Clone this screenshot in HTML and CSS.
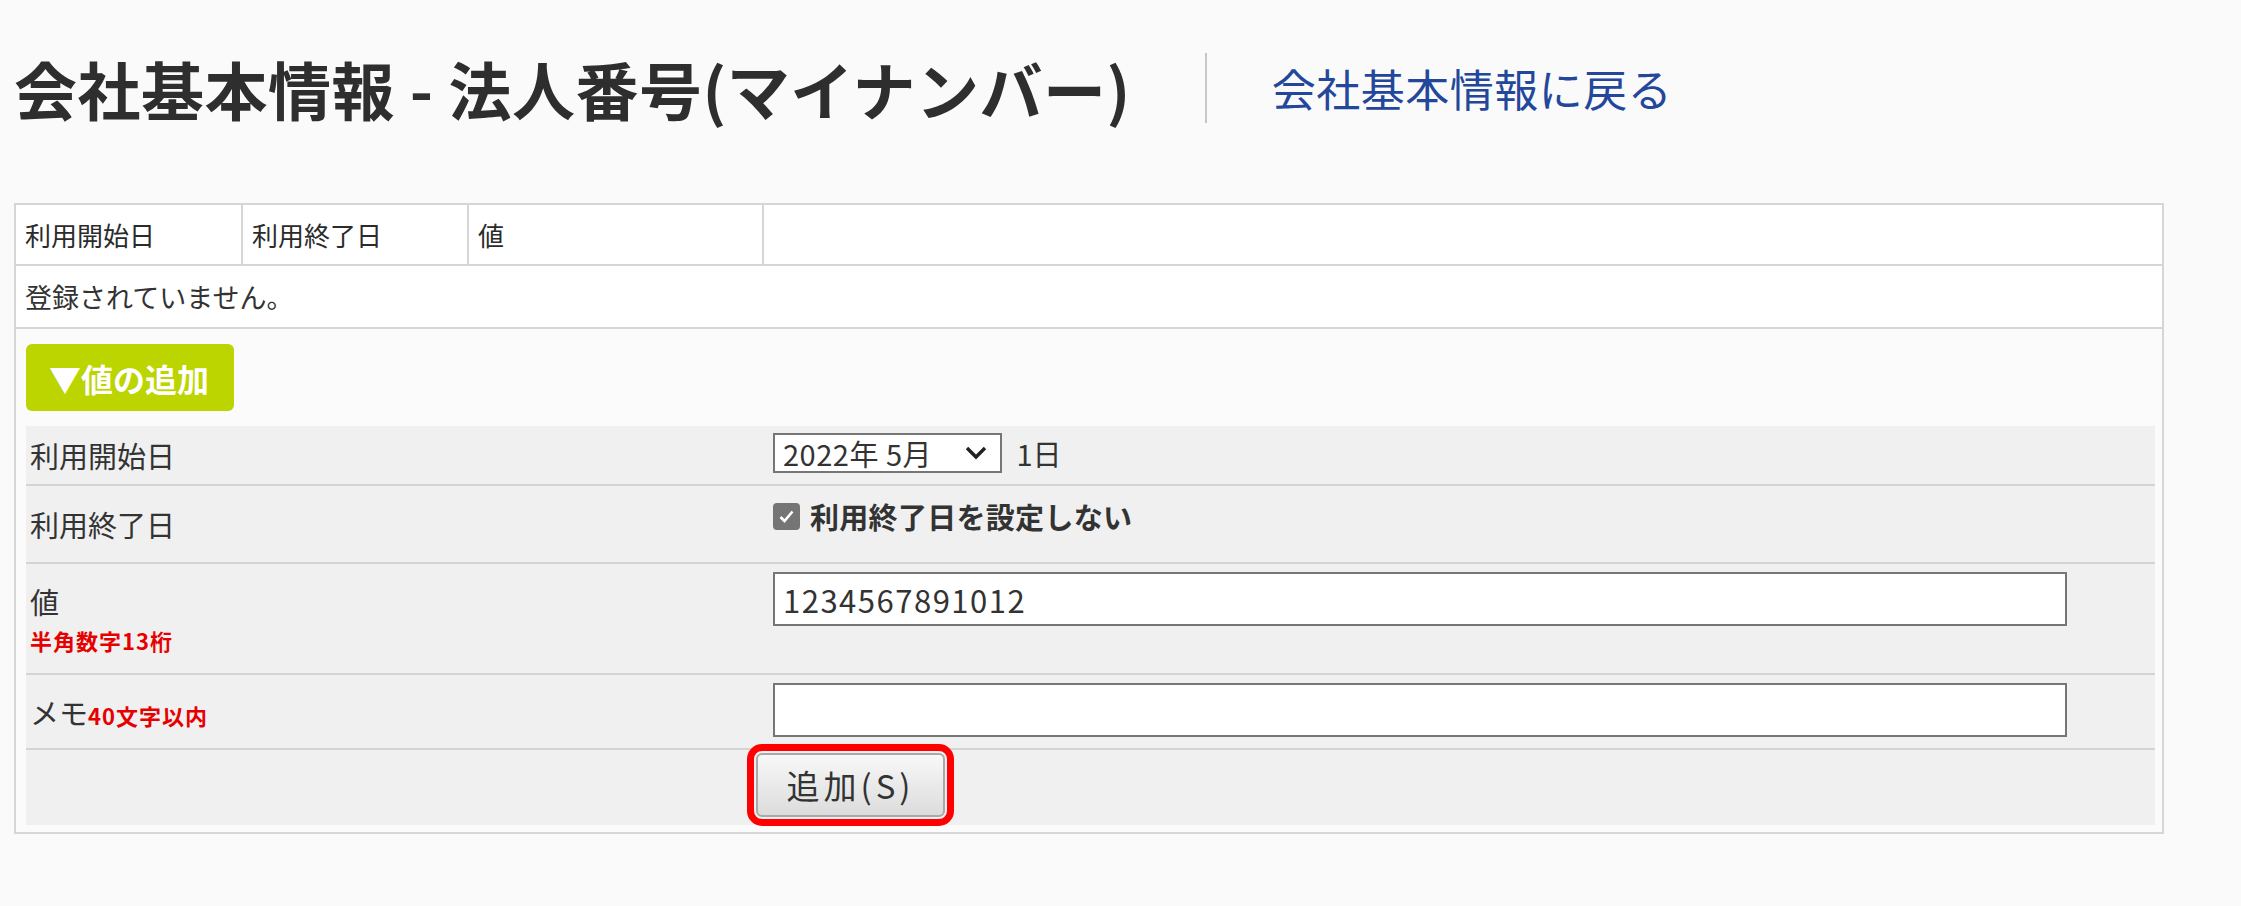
FILE: index.html
```html
<!DOCTYPE html>
<html lang="ja">
<head>
    <meta charset="UTF-8">
    <meta name="viewport" content="width=device-width, initial-scale=1.0">
    <title>会社基本情報 - 法人番号(マイナンバー)</title>
    <link rel="stylesheet" href="styles.css">
</head>
<body>
    <div class="page">
        <header class="page-head">
            <h1 class="page-title">会社基本情報 - 法人番号(マイナンバー)</h1>
            <span class="head-sep"></span>
            <a class="back-link" href="#">会社基本情報に戻る</a>
        </header>

        <table class="list">
            <tr class="list-head">
                <th class="col-start">利用開始日</th>
                <th class="col-end">利用終了日</th>
                <th class="col-value">値</th>
                <th></th>
            </tr>
            <tr>
                <td class="empty" colspan="4">登録されていません。</td>
            </tr>
            <tr>
                <td class="add-area" colspan="4">
                    <button class="toggle" type="button">▼値の追加</button>

                    <!-- 追加フォーム -->
                    <table class="form">
                        <tr class="row-start">
                            <th>利用開始日</th>
                            <td>
                                <span class="select-box">
                                    <span>2022年 5月</span>
                                    <svg width="22" height="14" viewBox="0 0 22 14"><polyline points="2,2 11,11 20,2" fill="none" stroke="#222" stroke-width="3.4"/></svg>
                                </span>
                                <span class="day">1日</span>
                            </td>
                        </tr>
                        <tr class="row-end">
                            <th>利用終了日</th>
                            <td>
                                <label class="check">
                                    <span class="check-box"><svg width="19" height="19" viewBox="0 0 19 19"><polyline points="3.5,10 7.5,14 15.5,4.5" fill="none" stroke="#fff" stroke-width="2.6"/></svg></span>
                                    利用終了日を設定しない
                                </label>
                            </td>
                        </tr>
                        <tr class="row-value">
                            <th>値<br><span class="note">半角数字13桁</span></th>
                            <td><input class="text-input" type="text" value="1234567891012"></td>
                        </tr>
                        <tr class="row-memo">
                            <th>メモ<span class="note">40文字以内</span></th>
                            <td><input class="text-input" type="text" value=""></td>
                        </tr>
                        <tr class="row-submit">
                            <th></th>
                            <td><button class="submit" type="submit">追加(S)</button></td>
                        </tr>
                    </table>
                </td>
            </tr>
        </table>
    </div>
</body>
</html>
```

FILE: styles.css
```css
* {
    box-sizing: border-box;
}

body {
    margin: 0;
    background: #fafafa;
    color: #333;
    font-family: "Noto Sans CJK JP", "Noto Sans", sans-serif;
}

.page {
    padding: 0 77px 0 14px;
}

/* 見出し */
.page-head {
    display: flex;
    align-items: center;
    padding-top: 50px;
}

.page-title {
    margin: 0;
    font-size: 63px;
    line-height: 76px;
    font-weight: 700;
    letter-spacing: 0.5px;
    color: #2e2e2e;
}

.head-sep {
    width: 2px;
    height: 70px;
    background: #c6c6c6;
    margin: 0 65px 0 74px;
}

.back-link {
    font-size: 44px;
    line-height: 1.2;
    letter-spacing: 0.5px;
    color: #23479b;
    text-decoration: none;
}

/* 一覧 */
.list {
    width: 100%;
    margin-top: 77px;
    border-collapse: collapse;
    border: 2px solid #d2d2d2;
    background: #fff;
}

.list-head th,
.list .empty,
.list .add-area {
    border: 2px solid #d6d6d6;
    text-align: left;
    font-weight: normal;
}

.list-head th {
    height: 61px;
    padding: 0 9px;
    font-size: 26px;
    color: #2b2b2b;
}

.list-head .col-start { width: 227px; }
.list-head .col-end { width: 226px; }
.list-head .col-value { width: 295px; }

.list .empty {
    height: 63px;
    padding: 0 9px;
    font-size: 27px;
}

.list .add-area {
    background: #fbfbfb;
    padding: 15px 7px 7px 10px;
}

.toggle {
    display: block;
    height: 67px;
    padding: 0 25px 0 23px;
    font-family: inherit;
    font-size: 32px;
    font-weight: 700;
    color: #fff;
    background: #bcd400;
    border: none;
    border-radius: 6px;
}

/* 追加フォーム */
.form {
    width: 100%;
    margin-top: 15px;
    border-collapse: collapse;
    background: #f0f0f0;
}

.form tr + tr > th,
.form tr + tr > td {
    border-top: 2px solid #d4d4d4;
}

.form th {
    width: 727px;
    padding: 0 0 0 4px;
    font-size: 29px;
    font-weight: normal;
    line-height: 36px;
    text-align: left;
    vertical-align: middle;
}

.form td {
    padding: 0 0 0 20px;
    font-size: 29px;
    vertical-align: top;
}

.row-start th, .row-start td { height: 59px; }
.row-start td { padding-top: 1px; }

.row-end th, .row-end td { height: 78px; }
.row-end td { padding-top: 10px; }

.row-value th, .row-value td { height: 111px; }
.row-value td { padding-top: 8px; }

.row-memo th, .row-memo td { height: 75px; }
.row-memo td { padding-top: 8px; }

.row-submit th, .row-submit td { height: 76px; }
.row-submit td { padding: 3px 0 0 3px; }

.note {
    font-size: 22px;
    font-weight: 700;
    letter-spacing: 1px;
    line-height: 30px;
    color: #e60000;
}

.select-box {
    display: inline-flex;
    align-items: center;
    justify-content: space-between;
    width: 229px;
    height: 40px;
    padding: 0 13px 0 8px;
    border: 2px solid #767676;
    background: #fff;
    line-height: 1;
    letter-spacing: 0.5px;
    vertical-align: middle;
}

.day {
    margin-left: 8px;
    vertical-align: middle;
}

.check {
    display: flex;
    align-items: center;
    height: 40px;
    font-weight: 700;
    letter-spacing: 0.3px;
}

.check-box {
    display: inline-flex;
    align-items: center;
    justify-content: center;
    width: 27px;
    height: 27px;
    margin-right: 10px;
    background: #757575;
    border-radius: 4px;
}

.text-input {
    display: block;
    width: 1294px;
    height: 54px;
    padding: 0 8px;
    font-family: inherit;
    font-size: 31px;
    letter-spacing: 1.5px;
    color: #333;
    background: #fff;
    border: 2px solid #767676;
    border-radius: 0;
}

.submit {
    width: 189px;
    height: 64px;
    padding: 0;
    font-family: inherit;
    font-size: 33px;
    letter-spacing: 4px;
    color: #333;
    background: linear-gradient(#f8f8f8, #dcdcdc);
    border: 2px solid #a9a9a9;
    border-radius: 6px;
    outline: 7px solid #f00;
    outline-offset: 2px;
}
```
